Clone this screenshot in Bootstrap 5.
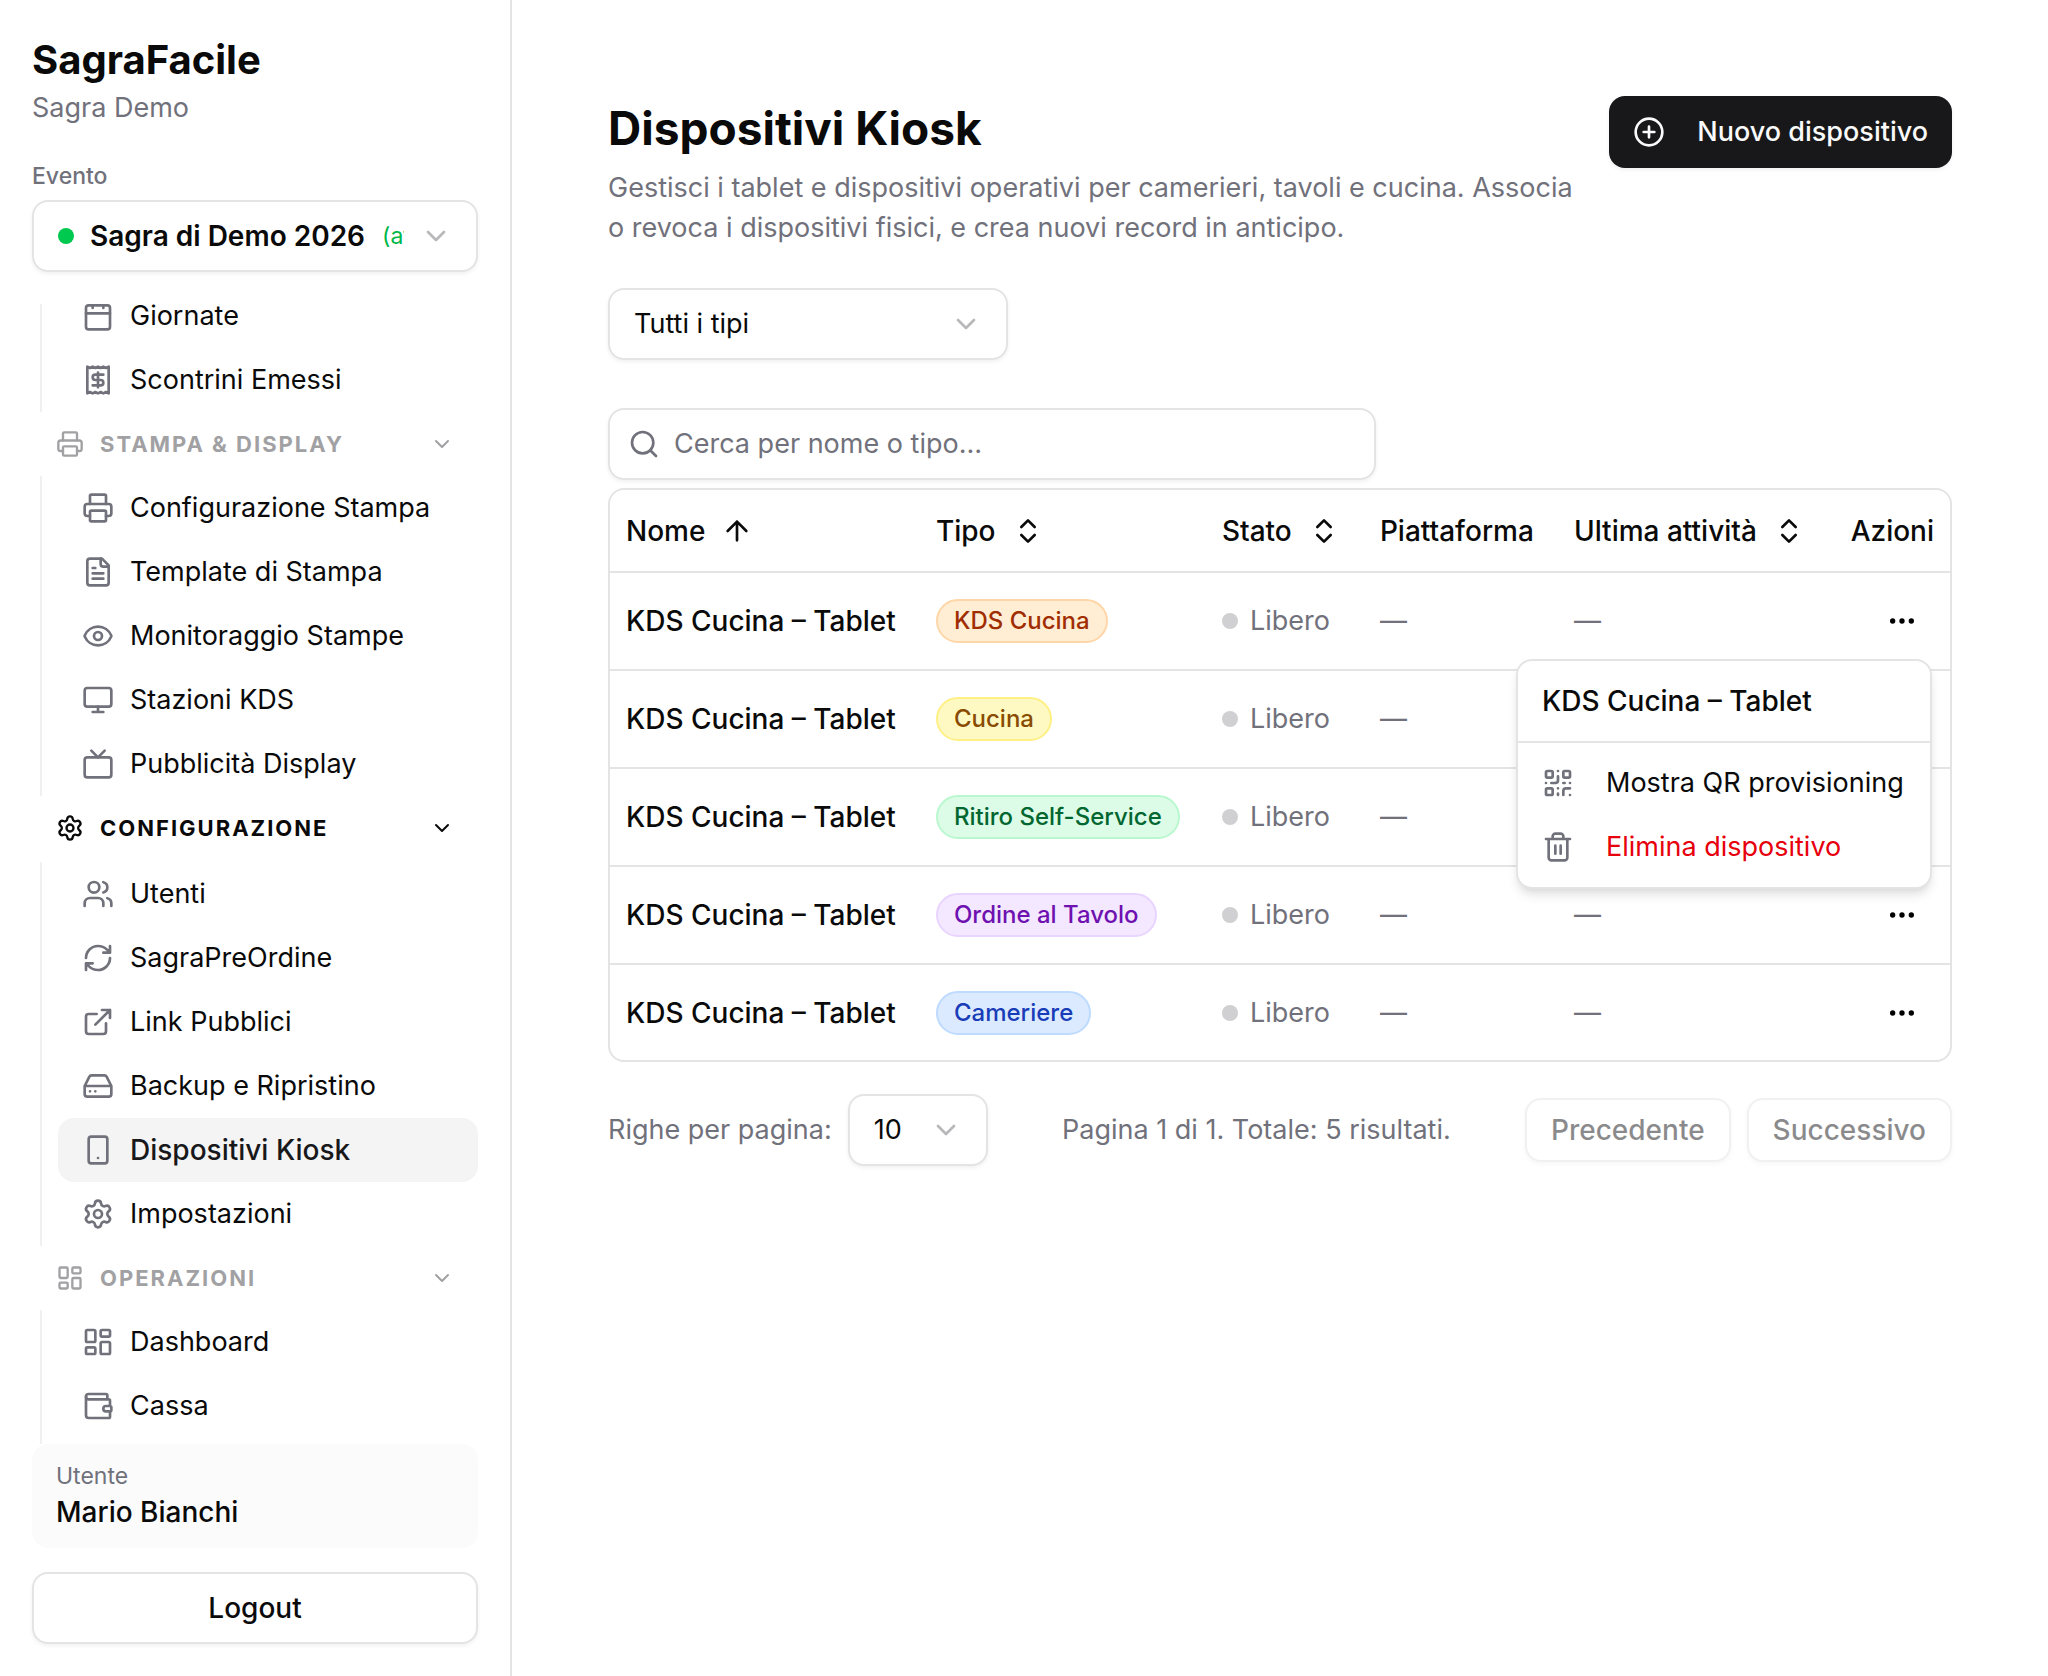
<!DOCTYPE html>
<html lang="it">
<head>
<meta charset="utf-8">
<meta name="viewport" content="width=device-width, initial-scale=1">
<title>Dispositivi Kiosk – SagraFacile</title>
<link href="https://cdn.jsdelivr.net/npm/bootstrap@5.3.0/dist/css/bootstrap.min.css" rel="stylesheet">
<style>
  :root { --ink: #0a0a0a; --muted: #71717b; --line: #e4e4e5; --r: 16px; }
  body { font-family: Inter, "Liberation Sans", sans-serif; font-size: 27px; line-height: 40px; color: var(--ink); background: #fff; }
  .ico { width: 32px; height: 32px; flex: none; fill: none; stroke: currentColor; stroke-width: 2; stroke-linecap: round; stroke-linejoin: round; }
  .muted { color: var(--muted); }
  .small-text { font-size: 23px; line-height: 32px; }
  .strong-text { font-size: 28px; font-weight: 500; }
  .soft { box-shadow: 0 2px 4px rgba(0,0,0,.06); }

  .side { width: 25%; min-width: 440px; height: 100vh; padding: 32px; border-right: 2px solid var(--line); position: sticky; top: 0; }
  .brand { font-size: 40px; line-height: 56px; font-weight: 700; margin: 0; }
  .box { border: 2px solid var(--line); border-radius: var(--r); background: #fff; height: 72px; padding: 0 24px; }
  .box > .ico { color: #b8b8bb; }
  .box select { appearance: none; border: 0; background: transparent; padding: 0; color: inherit; font: inherit; outline: 0; }
  .box .event-select { font-size: 28px; font-weight: 600; }
  .dot { width: 16px; height: 16px; border-radius: 50%; flex: none; background: #d0d0d2; }
  .dot-on { background: #00c950; }
  .on-text { color: #00b84a; }

  .side-nav { flex: 1 1 0; min-height: 0; overflow: hidden; margin-top: 32px; }
  .side-scroll { margin-top: -20px; }
  .side-group { margin-left: 8px; padding-left: 16px; border-left: 2px solid #f0f0f1; }
  .side-link { display: flex; align-items: center; gap: 16px; height: 64px; padding: 0 24px; border-radius: var(--r); color: var(--ink); text-decoration: none; white-space: nowrap; }
  .side-link .ico { color: var(--muted); }
  .side-link.active { background: #f4f4f4; color: #18181b; font-size: 28px; font-weight: 500; }
  .side-head { display: flex; align-items: center; gap: 16px; width: 100%; height: 64px; padding: 0 24px; border: 0; background: none; color: #a1a1a4; font-size: 22px; font-weight: 700; letter-spacing: 2px; text-transform: uppercase; }
  .side-head.open { color: var(--ink); margin-bottom: 2px; }
  .side-head .ico { width: 28px; height: 28px; }
  .side-head .ico:last-child { width: 24px; height: 24px; }
  .user-box { background: #fbfbfb; border-radius: var(--r); padding: 16px 24px; margin-bottom: 24px; }
  .btn-line { --bs-btn-color: var(--ink); --bs-btn-bg: #fff; --bs-btn-border-color: var(--line); --bs-btn-border-width: 2px; --bs-btn-border-radius: 16px; --bs-btn-font-size: 28px; --bs-btn-font-weight: 500; --bs-btn-disabled-opacity: .5; --bs-btn-disabled-color: #18181b; --bs-btn-disabled-bg: #fff; --bs-btn-disabled-border-color: var(--line); line-height: 40px; --bs-btn-padding-x: 24px; --bs-btn-padding-y: 10px; }
  .btn-tall { --bs-btn-padding-y: 14px; }
  .btn-ink { --bs-btn-color: #fafafa; --bs-btn-bg: #18181b; --bs-btn-hover-bg: #2c2c30; --bs-btn-hover-color: #fafafa; --bs-btn-border-width: 0; --bs-btn-border-radius: 16px; --bs-btn-font-size: 27px; --bs-btn-font-weight: 500; line-height: 40px; --bs-btn-padding-x: 24px; --bs-btn-padding-y: 16px; }

  .page { padding: 96px; }
  .page-title { font-size: 46px; line-height: 64px; font-weight: 700; margin: 0 0 8px; }
  .filter { width: 400px; margin: 40px 0 48px; }
  .search { width: 768px; max-width: 100%; padding: 0 18px; gap: 14px; }
  .search .ico { color: var(--muted); }
  .search input { border: 0; outline: 0; padding: 0; background: transparent; color: inherit; }
  .search input::placeholder { color: var(--muted); opacity: 1; }

  .frame { border: 2px solid var(--line); border-radius: var(--r); margin-top: 8px; }
  .devices { table-layout: fixed; margin: 0; --bs-table-bg: transparent; color: var(--ink); white-space: nowrap; }
  .devices > thead > tr > th { height: 82px; padding: 0 16px; font-size: 28px; font-weight: 500; vertical-align: middle; border-bottom: 2px solid var(--line); color: var(--ink); }
  .devices > tbody > tr > td { height: 98px; padding: 0 16px; vertical-align: middle; border-bottom: 2px solid var(--line); color: var(--ink); }
  .devices > tbody > tr:last-child > td { height: 96px; border-bottom: 0; }
  .devices > tbody > tr > td.muted { color: var(--muted); }
  .sort { display: inline-flex; align-items: center; gap: 16px; border: 0; padding: 0; background: none; font-weight: 500; color: inherit; }
  .tag { display: inline-block; height: 44px; line-height: 40px; font-size: 24px; font-weight: 500; padding: 0 16px; border: 2px solid; border-radius: 22px; vertical-align: middle; }
  .tag-orange { background: #ffedd4; border-color: #ffd6a8; color: #9f2d00; }
  .tag-yellow { background: #fef9c2; border-color: #fff085; color: #894b00; }
  .tag-green { background: #dcfce7; border-color: #b9f8cf; color: #016630; }
  .tag-purple { background: #f3e8ff; border-color: #e9d4ff; color: #6e11b0; }
  .tag-blue { background: #dbeafe; border-color: #bedbff; color: #193cb8; }
  .more { width: 64px; height: 64px; border: 0; background: none; padding: 0; display: inline-flex; align-items: center; justify-content: center; }
  .more .ico { fill: currentColor; }
  .row-menu { position: absolute; top: 70px; right: 2px; z-index: 5; width: 416px; background: #fff; border: 2px solid var(--line); border-radius: var(--r); box-shadow: 0 8px 12px -2px rgba(0,0,0,.1), 0 4px 8px -4px rgba(0,0,0,.1); text-align: left; padding-bottom: 8px; }
  .row-menu-title { padding: 20px 24px; border-bottom: 2px solid var(--line); margin-bottom: 8px; }
  .row-menu button { display: flex; align-items: center; gap: 32px; width: 100%; height: 64px; padding: 0 24px; border: 0; background: none; color: var(--ink); }
  .row-menu button.danger { color: #e7000b; }
  .row-menu .ico { color: var(--muted); }
  .pager { margin-top: 32px; }
  .page-size { width: 140px; }
</style>
<script src="https://cdn.jsdelivr.net/npm/bootstrap@5.3.0/dist/js/bootstrap.bundle.min.js"></script>
</head>
<body>
<svg class="d-none" aria-hidden="true">
  <symbol id="i-calendar" viewBox="0 0 24 24"><path d="M8 2v4M16 2v4M3 10h18"/><rect x="3" y="4" width="18" height="18" rx="2"/></symbol>
  <symbol id="i-receipt" viewBox="0 0 24 24"><path d="M4 2v20l2-1 2 1 2-1 2 1 2-1 2 1 2-1 2 1V2l-2 1-2-1-2 1-2-1-2 1-2-1-2 1Z"/><path d="M16 8h-6a2 2 0 1 0 0 4h4a2 2 0 1 1 0 4H8M12 17.5v-11"/></symbol>
  <symbol id="i-printer" viewBox="0 0 24 24"><path d="M6 18H4a2 2 0 0 1-2-2v-5a2 2 0 0 1 2-2h16a2 2 0 0 1 2 2v5a2 2 0 0 1-2 2h-2"/><path d="M6 9V3a1 1 0 0 1 1-1h10a1 1 0 0 1 1 1v6"/><rect x="6" y="14" width="12" height="8" rx="1"/></symbol>
  <symbol id="i-file" viewBox="0 0 24 24"><path d="M15 2H6a2 2 0 0 0-2 2v16a2 2 0 0 0 2 2h12a2 2 0 0 0 2-2V7Z"/><path d="M14 2v4a2 2 0 0 0 2 2h4M10 9H8M16 13H8M16 17H8"/></symbol>
  <symbol id="i-eye" viewBox="0 0 24 24"><path d="M2.062 12.348a1 1 0 0 1 0-.696 10.75 10.75 0 0 1 19.876 0 1 1 0 0 1 0 .696 10.75 10.75 0 0 1-19.876 0"/><circle cx="12" cy="12" r="3"/></symbol>
  <symbol id="i-monitor" viewBox="0 0 24 24"><rect x="2" y="3" width="20" height="14" rx="2"/><path d="M8 21h8M12 17v4"/></symbol>
  <symbol id="i-tv" viewBox="0 0 24 24"><rect x="2" y="7" width="20" height="15" rx="2"/><path d="m17 2-5 5-5-5"/></symbol>
  <symbol id="i-gear" viewBox="0 0 24 24"><path d="M9.671 4.136a2.34 2.34 0 0 1 4.659 0 2.34 2.34 0 0 0 3.319 1.915 2.34 2.34 0 0 1 2.33 4.033 2.34 2.34 0 0 0 0 3.831 2.34 2.34 0 0 1-2.33 4.033 2.34 2.34 0 0 0-3.319 1.915 2.34 2.34 0 0 1-4.659 0 2.34 2.34 0 0 0-3.32-1.915 2.34 2.34 0 0 1-2.33-4.033 2.34 2.34 0 0 0 0-3.831A2.34 2.34 0 0 1 6.35 6.051a2.34 2.34 0 0 0 3.319-1.915"/><circle cx="12" cy="12" r="3"/></symbol>
  <symbol id="i-users" viewBox="0 0 24 24"><path d="M16 21v-2a4 4 0 0 0-4-4H6a4 4 0 0 0-4 4v2M22 21v-2a4 4 0 0 0-3-3.87M16 3.13a4 4 0 0 1 0 7.75"/><circle cx="9" cy="7" r="4"/></symbol>
  <symbol id="i-refresh" viewBox="0 0 24 24"><path d="M3 12a9 9 0 0 1 9-9 9.75 9.75 0 0 1 6.74 2.74L21 8M21 3v5h-5M21 12a9 9 0 0 1-9 9 9.75 9.75 0 0 1-6.74-2.74L3 16M8 16H3v5"/></symbol>
  <symbol id="i-external" viewBox="0 0 24 24"><path d="M15 3h6v6M10 14 21 3M18 13v6a2 2 0 0 1-2 2H5a2 2 0 0 1-2-2V8a2 2 0 0 1 2-2h6"/></symbol>
  <symbol id="i-drive" viewBox="0 0 24 24"><path d="M22 12H2M5.45 5.11 2 12v6a2 2 0 0 0 2 2h16a2 2 0 0 0 2-2v-6l-3.45-6.89A2 2 0 0 0 16.76 4H7.24a2 2 0 0 0-1.79 1.11zM6 16h.01M10 16h.01"/></symbol>
  <symbol id="i-phone" viewBox="0 0 24 24"><rect x="5" y="2" width="14" height="20" rx="2"/><path d="M12 18h.01"/></symbol>
  <symbol id="i-grid" viewBox="0 0 24 24"><rect x="3" y="3" width="7" height="9" rx="1"/><rect x="14" y="3" width="7" height="5" rx="1"/><rect x="14" y="12" width="7" height="9" rx="1"/><rect x="3" y="16" width="7" height="5" rx="1"/></symbol>
  <symbol id="i-wallet" viewBox="0 0 24 24"><path d="M19 7V4a1 1 0 0 0-1-1H5a2 2 0 0 0 0 4h15a1 1 0 0 1 1 1v4h-3a2 2 0 0 0 0 4h3a1 1 0 0 0 1-1v-2a1 1 0 0 0-1-1"/><path d="M3 5v14a2 2 0 0 0 2 2h15a1 1 0 0 0 1-1v-4"/></symbol>
  <symbol id="i-down" viewBox="0 0 24 24"><path d="m6 9 6 6 6-6"/></symbol>
  <symbol id="i-up" viewBox="0 0 24 24"><path d="m5 12 7-7 7 7M12 19V5"/></symbol>
  <symbol id="i-sort" viewBox="0 0 24 24"><path d="m7 15 5 5 5-5M7 9l5-5 5 5"/></symbol>
  <symbol id="i-plus" viewBox="0 0 24 24"><circle cx="12" cy="12" r="10"/><path d="M8 12h8M12 8v8"/></symbol>
  <symbol id="i-search" viewBox="0 0 24 24"><circle cx="11" cy="11" r="8"/><path d="m21 21-4.340-4.340"/></symbol>
  <symbol id="i-more" viewBox="0 0 24 24"><circle cx="12" cy="12" r="1"/><circle cx="19" cy="12" r="1"/><circle cx="5" cy="12" r="1"/></symbol>
  <symbol id="i-qr" viewBox="0 0 24 24"><rect x="3" y="3" width="5" height="5" rx="1"/><rect x="16" y="3" width="5" height="5" rx="1"/><rect x="3" y="16" width="5" height="5" rx="1"/><path d="M21 16h-3a2 2 0 0 0-2 2v3M21 21v.01M12 7v3a2 2 0 0 1-2 2H7M3 12h.01M12 3h.01M12 16v.01M16 12h1M21 12v.01M12 21v-1"/></symbol>
  <symbol id="i-trash" viewBox="0 0 24 24"><path d="M3 6h18M19 6v14c0 1-1 2-2 2H7c-1 0-2-1-2-2V6M8 6V4c0-1 1-2 2-2h4c1 0 2 1 2 2v2M10 11v6M14 11v6"/></symbol>
</svg>

<div class="d-flex align-items-start">
  <aside class="side d-flex flex-column flex-shrink-0">
    <h2 class="brand">SagraFacile</h2>
    <div class="muted">Sagra Demo</div>
    <label class="muted small-text fw-medium mt-4 pt-2 mb-2" for="event">Evento</label>
    <div class="box soft d-flex align-items-center gap-3 flex-shrink-0">
      <span class="dot dot-on"></span>
      <div class="d-flex align-items-center gap-3 overflow-hidden flex-grow-1 text-nowrap">
        <select id="event" class="event-select flex-shrink-0"><option>Sagra di Demo 2026</option></select>
        <span class="on-text small-text">(attivo)</span>
      </div>
      <svg class="ico"><use href="#i-down"/></svg>
    </div>

    <nav class="side-nav" aria-label="Menu principale">
      <div class="side-scroll">
        <div class="side-group">
          <a class="side-link" href="#"><svg class="ico"><use href="#i-calendar"/></svg>Giornate</a>
          <a class="side-link" href="#"><svg class="ico"><use href="#i-receipt"/></svg>Scontrini Emessi</a>
        </div>
        <button class="side-head" type="button"><svg class="ico"><use href="#i-printer"/></svg><span class="me-auto">Stampa &amp; Display</span><svg class="ico"><use href="#i-down"/></svg></button>
        <div class="side-group">
          <a class="side-link" href="#"><svg class="ico"><use href="#i-printer"/></svg>Configurazione Stampa</a>
          <a class="side-link" href="#"><svg class="ico"><use href="#i-file"/></svg>Template di Stampa</a>
          <a class="side-link" href="#"><svg class="ico"><use href="#i-eye"/></svg>Monitoraggio Stampe</a>
          <a class="side-link" href="#"><svg class="ico"><use href="#i-monitor"/></svg>Stazioni KDS</a>
          <a class="side-link" href="#"><svg class="ico"><use href="#i-tv"/></svg>Pubblicità Display</a>
        </div>
        <button class="side-head open" type="button"><svg class="ico"><use href="#i-gear"/></svg><span class="me-auto">Configurazione</span><svg class="ico"><use href="#i-down"/></svg></button>
        <div class="side-group">
          <a class="side-link" href="#"><svg class="ico"><use href="#i-users"/></svg>Utenti</a>
          <a class="side-link" href="#"><svg class="ico"><use href="#i-refresh"/></svg>SagraPreOrdine</a>
          <a class="side-link" href="#"><svg class="ico"><use href="#i-external"/></svg>Link Pubblici</a>
          <a class="side-link" href="#"><svg class="ico"><use href="#i-drive"/></svg>Backup e Ripristino</a>
          <a class="side-link active" href="#" aria-current="page"><svg class="ico"><use href="#i-phone"/></svg>Dispositivi Kiosk</a>
          <a class="side-link" href="#"><svg class="ico"><use href="#i-gear"/></svg>Impostazioni</a>
        </div>
        <button class="side-head" type="button"><svg class="ico"><use href="#i-grid"/></svg><span class="me-auto">Operazioni</span><svg class="ico"><use href="#i-down"/></svg></button>
        <div class="side-group pb-2">
          <a class="side-link" href="#"><svg class="ico"><use href="#i-grid"/></svg>Dashboard</a>
          <a class="side-link" href="#"><svg class="ico"><use href="#i-wallet"/></svg>Cassa</a>
        </div>
      </div>
    </nav>

    <div class="user-box">
      <div class="muted small-text">Utente</div>
      <div class="strong-text">Mario Bianchi</div>
    </div>
    <button class="btn btn-line btn-tall soft w-100" type="button">Logout</button>
  </aside>

  <main class="page flex-grow-1">
    <header class="d-flex align-items-start justify-content-between gap-4">
      <div>
        <h1 class="page-title">Dispositivi Kiosk</h1>
        <p class="muted mb-0">Gestisci i tablet e dispositivi operativi per camerieri, tavoli e cucina. Associa o revoca i dispositivi fisici, e crea nuovi record in anticipo.</p>
      </div>
      <button class="btn btn-ink soft d-flex align-items-center text-nowrap flex-shrink-0" type="button"><svg class="ico me-3"><use href="#i-plus"/></svg><span class="ms-3">Nuovo dispositivo</span></button>
    </header>

    <div class="box soft filter d-flex align-items-center">
      <select class="flex-grow-1" aria-label="Tipo di dispositivo"><option>Tutti i tipi</option></select>
      <svg class="ico"><use href="#i-down"/></svg>
    </div>

    <label class="box soft search d-flex align-items-center">
      <svg class="ico"><use href="#i-search"/></svg>
      <input class="flex-grow-1" type="search" placeholder="Cerca per nome o tipo…" aria-label="Cerca per nome o tipo">
    </label>

    <div class="frame">
      <table class="table devices">
        <colgroup><col style="width:23.13%"><col style="width:21.34%"><col style="width:11.790%"><col style="width:14.480%"><col style="width:20.300%"><col></colgroup>
        <thead>
          <tr>
            <th scope="col"><button class="sort" type="button">Nome<svg class="ico"><use href="#i-up"/></svg></button></th>
            <th scope="col"><button class="sort" type="button">Tipo<svg class="ico"><use href="#i-sort"/></svg></button></th>
            <th scope="col"><button class="sort" type="button">Stato<svg class="ico"><use href="#i-sort"/></svg></button></th>
            <th scope="col">Piattaforma</th>
            <th scope="col"><button class="sort" type="button">Ultima attività<svg class="ico"><use href="#i-sort"/></svg></button></th>
            <th scope="col" class="text-end">Azioni</th>
          </tr>
        </thead>
        <tbody>
          <tr>
            <td class="strong-text">KDS Cucina – Tablet</td>
            <td><span class="tag tag-orange">KDS Cucina</span></td>
            <td class="muted"><span class="d-flex align-items-center gap-2"><span class="dot me-1"></span>Libero</span></td>
            <td class="muted">—</td>
            <td class="muted">—</td>
            <td class="text-end">
              <div class="position-relative d-inline-flex">
                <button class="more" type="button" aria-label="Azioni" aria-expanded="true"><svg class="ico"><use href="#i-more"/></svg></button>
                <div class="row-menu">
                  <div class="row-menu-title strong-text">KDS Cucina – Tablet</div>
                  <button type="button"><svg class="ico"><use href="#i-qr"/></svg>Mostra QR provisioning</button>
                  <button type="button" class="danger"><svg class="ico"><use href="#i-trash"/></svg>Elimina dispositivo</button>
                </div>
              </div>
            </td>
          </tr>
          <tr>
            <td class="strong-text">KDS Cucina – Tablet</td>
            <td><span class="tag tag-yellow">Cucina</span></td>
            <td class="muted"><span class="d-flex align-items-center gap-2"><span class="dot me-1"></span>Libero</span></td>
            <td class="muted">—</td>
            <td class="muted">—</td>
            <td class="text-end"><button class="more" type="button" aria-label="Azioni"><svg class="ico"><use href="#i-more"/></svg></button></td>
          </tr>
          <tr>
            <td class="strong-text">KDS Cucina – Tablet</td>
            <td><span class="tag tag-green">Ritiro Self-Service</span></td>
            <td class="muted"><span class="d-flex align-items-center gap-2"><span class="dot me-1"></span>Libero</span></td>
            <td class="muted">—</td>
            <td class="muted">—</td>
            <td class="text-end"><button class="more" type="button" aria-label="Azioni"><svg class="ico"><use href="#i-more"/></svg></button></td>
          </tr>
          <tr>
            <td class="strong-text">KDS Cucina – Tablet</td>
            <td><span class="tag tag-purple">Ordine al Tavolo</span></td>
            <td class="muted"><span class="d-flex align-items-center gap-2"><span class="dot me-1"></span>Libero</span></td>
            <td class="muted">—</td>
            <td class="muted">—</td>
            <td class="text-end"><button class="more" type="button" aria-label="Azioni"><svg class="ico"><use href="#i-more"/></svg></button></td>
          </tr>
          <tr>
            <td class="strong-text">KDS Cucina – Tablet</td>
            <td><span class="tag tag-blue">Cameriere</span></td>
            <td class="muted"><span class="d-flex align-items-center gap-2"><span class="dot me-1"></span>Libero</span></td>
            <td class="muted">—</td>
            <td class="muted">—</td>
            <td class="text-end"><button class="more" type="button" aria-label="Azioni"><svg class="ico"><use href="#i-more"/></svg></button></td>
          </tr>
        </tbody>
      </table>
    </div>

    <footer class="pager d-flex align-items-center justify-content-between text-nowrap">
      <div class="d-flex align-items-center gap-3">
        <label class="muted" for="page-size">Righe per pagina:</label>
        <div class="box soft page-size d-flex align-items-center">
          <select id="page-size" class="flex-grow-1"><option>10</option></select>
          <svg class="ico"><use href="#i-down"/></svg>
        </div>
      </div>
      <div class="muted">Pagina 1 di 1. Totale: 5 risultati.</div>
      <div class="d-flex gap-3">
        <button class="btn btn-line soft" type="button" disabled>Precedente</button>
        <button class="btn btn-line soft" type="button" disabled>Successivo</button>
      </div>
    </footer>
  </main>
</div>
</body>
</html>
